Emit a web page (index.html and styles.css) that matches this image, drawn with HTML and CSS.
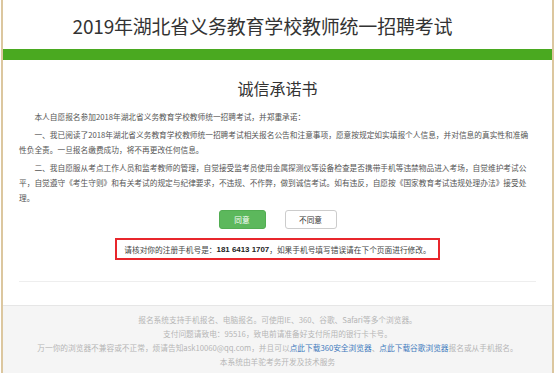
FILE: index.html
```html
<!DOCTYPE html>
<html lang="zh-CN">
<head>
<meta charset="utf-8">
<title>诚信承诺书</title>
<link rel="stylesheet" href="styles.css">
</head>
<body>
<div class="page">
  <header class="header">
    <h1 class="site-title">2019年湖北省义务教育学校教师统一招聘考试</h1>
  </header>
  <div class="green-bar"></div>
  <main class="content">
    <h2 class="doc-title">诚信承诺书</h2>
    <p class="para">本人自愿报名参加2018年湖北省义务教育学校教师统一招聘考试，并郑重承诺：</p>
    <p class="para">一、我已阅读了2018年湖北省义务教育学校教师统一招聘考试相关报名公告和注意事项，愿意按规定如实填报个人信息，并对信息的真实性和准确<br>性负全责。一旦报名缴费成功，将不再更改任何信息。</p>
    <p class="para">二、我自愿服从考点工作人员和监考教师的管理，自觉接受监考员使用金属探测仪等设备检查是否携带手机等违禁物品进入考场，自觉维护考试公<br>平，自觉遵守《考生守则》和有关考试的规定与纪律要求，不违规、不作弊，做到诚信考试。如有违反，自愿按《国家教育考试违规处理办法》接受处<br>理。</p>
    <div class="actions">
      <button class="btn btn-agree">同意</button>
      <button class="btn btn-disagree">不同意</button>
    </div>
    <div class="notice-wrap">
      <div class="notice">请核对你的注册手机号是：<b>181 6413 1707</b>，如果手机号填写错误请在下个页面进行修改。</div>
    </div>
    <hr class="divider">
  </main>
  <footer class="footer">
    <p>报名系统支持手机报名、电脑报名。可使用IE、360、谷歌、Safari等多个浏览器。</p>
    <p>支付问题请致电：95516，致电前请准备好支付所用的银行卡卡号。</p>
    <p>万一你的浏览器不兼容或不正常，烦请告知ask10060@qq.com，并且可以<a href="#">点此下载360安全浏览器</a>、<a href="#">点此下载谷歌浏览器</a>报名或从手机报名。</p>
    <p>本系统由羊驼考务开发及技术服务</p>
  </footer>
</div>
</body>
</html>
```
FILE: styles.css
```css
* { box-sizing: border-box; }
html, body {
  margin: 0;
  padding: 0;
  background: #ffffff;
}
body {
  font-family: "Noto Sans CJK SC", "Liberation Sans", sans-serif;
  color: #333333;
}
.page {
  margin-left: 1px;
  width: 553px;
  min-height: 373px;
  border-left: 2px solid #dcc79f;
  border-right: 2px solid #dcc79f;
  background: #ffffff;
}
.header {
  height: 49px;
  display: flex;
  align-items: center;
  justify-content: center;
  padding-right: 30px;
}
.site-title {
  margin: 0;
  padding-top: 2px;
  font-size: 19px;
  font-weight: normal;
  color: #333333;
  letter-spacing: -0.2px;
}
.green-bar {
  height: 11px;
  background: #4aa920;
}
.content {
  padding: 17px 16px 0 16px;
}
.doc-title {
  margin: 0;
  font-size: 16px;
  line-height: 22px;
  font-weight: normal;
  text-align: center;
  color: #333333;
}
.para {
  margin: 10px 0 0 0;
  font-size: 7.7px;
  line-height: 15px;
  text-indent: 2em;
  color: #555555;
  white-space: nowrap;
}
.para + .para { margin-top: 3px; }
.actions {
  display: flex;
  justify-content: center;
  gap: 19px;
  margin-top: 5px;
}
.btn {
  font-family: inherit;
  font-size: 7.7px;
  height: 19px;
  border-radius: 3px;
  padding: 0;
  cursor: pointer;
}
.btn-agree {
  width: 47px;
  background: #5cb85c;
  border: 1px solid #52ad52;
  color: #ffffff;
}
.btn-disagree {
  width: 52px;
  background: #ffffff;
  border: 1px solid #cccccc;
  color: #333333;
}
.notice-wrap {
  display: flex;
  justify-content: center;
  margin-top: 9px;
}
.notice {
  border: 2px solid #e8262c;
  padding: 0 7px;
  height: 22px;
  display: flex;
  align-items: center;
  font-size: 7.7px;
  color: #444444;
  white-space: nowrap;
}
.notice b { color: #222222; font-family: "Liberation Sans", sans-serif; font-size: 7.9px; }
.divider {
  margin: 21px 0 0 0;
  border: 0;
  border-top: 1px solid #eeeeee;
  height: 0;
}
.footer {
  margin-top: 23px;
  background: #f5f5f5;
  border-top: 1px solid #e6e6e6;
  padding: 7px 0 4px;
  text-align: center;
  font-size: 7.7px;
  color: #b5b5b5;
}
.footer p {
  margin: 0;
  line-height: 14px;
}
.footer a {
  color: #3f7bbd;
  text-decoration: none;
}
```
